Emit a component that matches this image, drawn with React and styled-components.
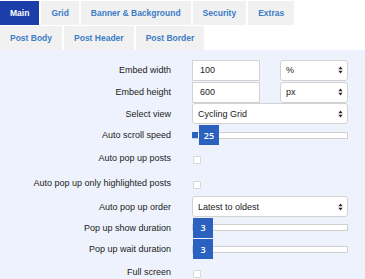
import React from 'react'
import styled, { createGlobalStyle } from 'styled-components'

const Global = createGlobalStyle`
  html, body { margin: 0; padding: 0; background: #fff; }
  body { font-family: "Liberation Sans", Arial, sans-serif; }
`

const tabs = [
  ['Main', 'Grid', 'Banner & Background', 'Security', 'Extras'],
  ['Post Body', 'Post Header', 'Post Border'],
]

function Arrows() {
  return (
    <ArrowIcon width="5" height="8" viewBox="0 0 5 8">
      <path d="M2.5 0.5 L4.6 3.2 L0.4 3.2 Z" fill="#222" />
      <path d="M2.5 7.5 L4.6 4.8 L0.4 4.8 Z" fill="#222" />
    </ArrowIcon>
  )
}

function Select({ value, wide }) {
  return (
    <SelectWrap wide={wide}>
      <SelectBox>{value}</SelectBox>
      <Arrows />
    </SelectWrap>
  )
}

function Slider({ value, fill }) {
  return (
    <SliderWrap>
      <Track />
      {fill > 0 && <Fill style={{ width: fill }} />}
      <Thumb style={{ left: fill > 0 ? fill + 1 : 1 }}>{value}</Thumb>
    </SliderWrap>
  )
}

function App() {
  return (
    <>
      <Global />
      <TabBar>
        {tabs.map((row, i) => (
          <TabRow key={i}>
            {row.map(t => (
              <Tab key={t} active={t === 'Main'}>{t}</Tab>
            ))}
          </TabRow>
        ))}
      </TabBar>
      <Panel>
        <Row h={22}>
          <Label>Embed width</Label>
          <Pair>
            <Input>100</Input>
            <Select value="%" />
          </Pair>
        </Row>
        <Row h={22}>
          <Label>Embed height</Label>
          <Pair>
            <Input>600</Input>
            <Select value="px" />
          </Pair>
        </Row>
        <Row h={21}>
          <Label>Select view</Label>
          <Select value="Cycling Grid" wide />
        </Row>
        <Row h={22}>
          <Label>Auto scroll speed</Label>
          <Slider value="25" fill={6} />
        </Row>
        <Row h={24}>
          <Label>Auto pop up posts</Label>
          <Check />
        </Row>
        <Row h={26}>
          <Label>Auto pop up only highlighted posts</Label>
          <Check />
        </Row>
        <Row h={21}>
          <Label>Auto pop up order</Label>
          <Select value="Latest to oldest" wide />
        </Row>
        <Row h={21}>
          <Label>Pop up show duration</Label>
          <Slider value="3" fill={0} />
        </Row>
        <Row h={22}>
          <Label>Pop up wait duration</Label>
          <Slider value="3" fill={0} />
        </Row>
        <Row h={24}>
          <Label>Full screen</Label>
          <Check />
        </Row>
      </Panel>
    </>
  )
}

export default App

const TabBar = styled.div`
  display: flex;
  flex-direction: column;
  gap: 1px;
  padding-top: 1px;
`

const TabRow = styled.div`
  display: flex;
  gap: 2px;
`

const Tab = styled.div`
  height: 24px;
  padding: 0 10px;
  display: flex;
  align-items: center;
  font-size: 8.5px;
  font-weight: bold;
  color: ${p => (p.active ? '#fff' : '#3c7cc6')};
  background: ${p => (p.active ? '#1c3eab' : '#f1f1f1')};
`

const Panel = styled.div`
  background: #eef2fd;
  padding-top: 9px;
  min-height: 229px;
  box-sizing: border-box;
`

const Row = styled.div`
  height: ${p => p.h}px;
  display: grid;
  grid-template-columns: 171px 156px;
  column-gap: 21px;
  align-items: center;
`

const Label = styled.div`
  text-align: right;
  font-size: 9px;
  color: #222;
  white-space: nowrap;
`

const Pair = styled.div`
  display: grid;
  grid-template-columns: 68px 68px;
  justify-content: space-between;
`

const Input = styled.div`
  height: 21px;
  box-sizing: border-box;
  background: #fff;
  border: 1px solid #d2d2d2;
  padding-left: 7px;
  display: flex;
  align-items: center;
  font-size: 9px;
  color: #222;
`

const SelectWrap = styled.div`
  position: relative;
  height: 21px;
  box-sizing: border-box;
  width: ${p => (p.wide ? '156px' : '68px')};
  background: #fff;
  border: 1px solid #d2d2d2;
  border-radius: 3px;
  display: flex;
  align-items: center;
`

const SelectBox = styled.div`
  padding-left: ${p => (p.wide ? 5 : 5)}px;
  font-size: 9px;
  color: #222;
`

const ArrowIcon = styled.svg`
  position: absolute;
  right: 4px;
  top: 50%;
  margin-top: -4px;
`

const SliderWrap = styled.div`
  position: relative;
  height: 20px;
  display: flex;
  align-items: center;
`

const Track = styled.div`
  width: 156px;
  height: 7px;
  box-sizing: border-box;
  background: #fff;
  border: 1px solid #cfcfcf;
`

const Fill = styled.div`
  position: absolute;
  left: 0;
  top: 7px;
  height: 6px;
  background: #2b62c0;
`

const Thumb = styled.div`
  position: absolute;
  top: 0;
  width: 20px;
  height: 20px;
  background: #2b62c0;
  color: #fff;
  font-family: "Open Sans", "Liberation Sans", sans-serif;
  font-size: 9px;
  font-weight: 600;
  display: flex;
  align-items: center;
  justify-content: center;
`

const Check = styled.div`
  width: 8px;
  height: 8px;
  margin-top: 4px;
  margin-left: 1px;
  background: #fff;
  border: 1px solid #d8d8d8;
  border-radius: 1px;
  box-sizing: border-box;
`
